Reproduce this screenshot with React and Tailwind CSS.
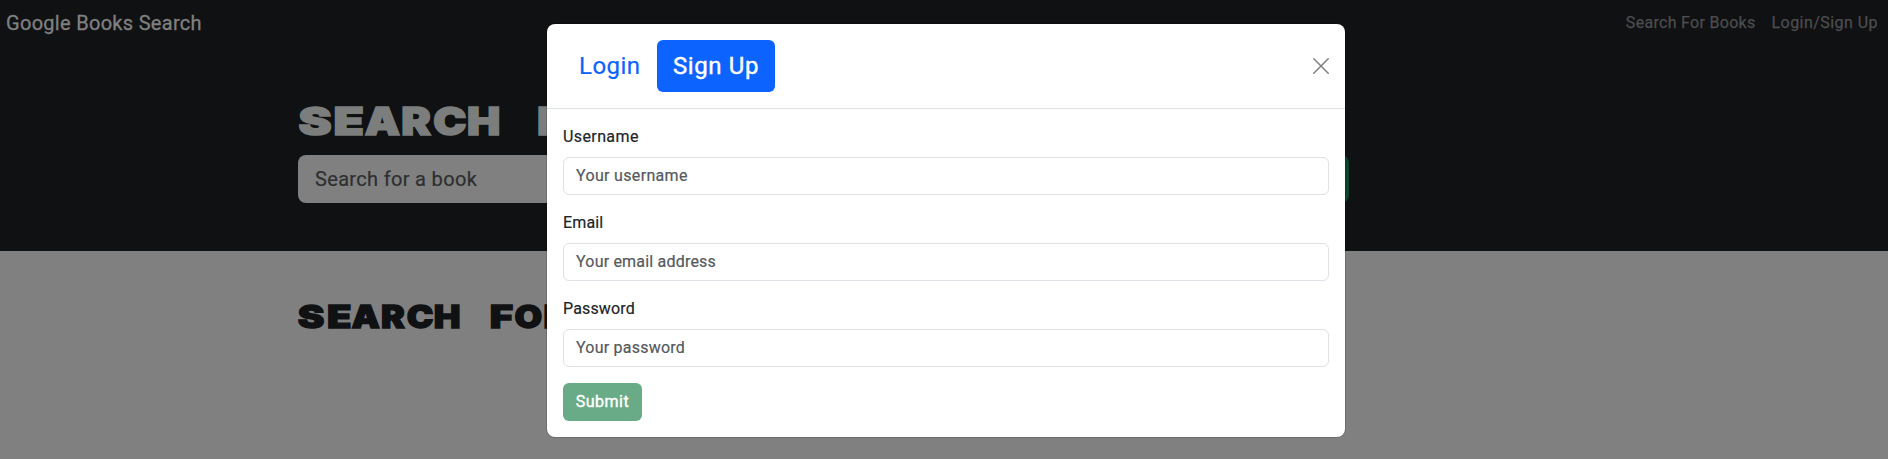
const fields = [
  { label: "Username", placeholder: "Your username", labelSpacing: "tracking-[0.4px]", inputSpacing: "tracking-[0.33px]" },
  { label: "Email", placeholder: "Your email address", labelSpacing: "tracking-[0.15px]", inputSpacing: "tracking-[0.2px]" },
  { label: "Password", placeholder: "Your password", labelSpacing: "tracking-[0.15px]", inputSpacing: "tracking-[0.23px]" },
];

// Sets each character in an equal-width cell, giving a monospaced display face.
// Narrow letters are widened so that they fill their cell.
function MonoText({ text }) {
  return text.split("").map((ch, i) => (
    <span key={i} className="inline-block w-[0.76em] text-center whitespace-pre">
      <span className={`-mx-2 inline-block ${"SEF".includes(ch) ? "scale-x-[1.12]" : ""}`}>{ch}</span>
    </span>
  ));
}

function Page() {
  return (
    <div className="h-[459px] w-full bg-[#808080]">
      <div className="h-[251px] bg-[#101113]">
        <nav className="flex h-[46px] items-center justify-between pr-[10px] pl-[6px]">
          <span className="text-[20px] tracking-[0.3px] text-[#808080] [-webkit-text-stroke:0.3px_#808080]">Google Books Search</span>
          <div className="flex gap-4 pb-px text-[16px] text-[#4c4d4e] [-webkit-text-stroke:0.25px_#4c4d4e]">
            <span className="tracking-[0.3px]">Search For Books</span>
            <span className="tracking-[0.45px]">Login/Sign Up</span>
          </div>
        </nav>
        <div className="ml-[298px] w-[1051px] pt-[51px]">
          <h1 className="h-[58px] origin-left scale-x-[1.162] font-[Inter] text-[38.2px] leading-[48px] font-black whitespace-nowrap text-[#7c7d7d] [-webkit-text-stroke:1.6px_#7c7d7d]"><MonoText text="SEARCH FOR" /></h1>
          <div className="flex justify-between">
            <div className="flex h-12 w-[860px] items-center rounded-lg bg-[#808080] px-[17px] text-[20px] tracking-[0.33px] text-[#2d2f30] [-webkit-text-stroke:0.2px_#2d2f30]">Search for a book</div>
            <div className="h-12 w-[170px] rounded-lg bg-[#0c442a]" />
          </div>
        </div>
      </div>
      <h2 className="ml-[298px] w-[300px] origin-left scale-x-[1.162] pt-[47px] font-[Inter] text-[30.7px] leading-[38px] font-black whitespace-nowrap text-[#101113] [-webkit-text-stroke:1.3px_#101113]"><MonoText text="SEARCH FOR" /></h2>
    </div>
  );
}

function SignUpModal() {
  return (
    <div className="absolute top-[24px] left-[547px] flex h-[413px] w-[798px] flex-col rounded-lg bg-white text-[16px] text-[#212529] shadow-[0_0_0_1px_rgba(0,0,0,0.15)] [-webkit-text-stroke:0.2px_currentColor]">
      <div className="flex h-[85px] shrink-0 items-center justify-between border-b border-[#dee2e6] px-4">
        <div className="flex h-[52px] text-[24px] text-[#0d63fd]">
          <button className="w-[94px] pl-[16px] text-left tracking-[0.45px]">Login</button>
          <button className="w-[118px] rounded-md bg-[#0d63fd] tracking-[0.6px] text-white [-webkit-text-stroke:0.4px_white]">Sign Up</button>
        </div>
        <svg viewBox="0 0 16 16" className="h-4 w-4" fill="none" stroke="#7f7f7f" strokeWidth="1.5" strokeLinecap="round">
          <path d="M.8.8 15.2 15.2M15.2.8.8 15.2" />
        </svg>
      </div>
      <div className="px-4 pt-4">
        {fields.map((f) => (
          <div key={f.label} className="mb-4">
            <div className={`mb-2 h-6 leading-6 ${f.labelSpacing}`}>{f.label}</div>
            <div className={`flex h-[38px] items-center rounded-md border border-[#dee2e6] px-3 text-[#55595c] ${f.inputSpacing}`}>{f.placeholder}</div>
          </div>
        ))}
        <button className="h-[38px] w-[79px] rounded-md bg-[#69aa87] tracking-[0.5px] text-white [-webkit-text-stroke:0.4px_white]">Submit</button>
      </div>
    </div>
  );
}

export default function App() {
  return (
    <div className="relative h-[459px] overflow-hidden font-[Roboto,sans-serif]">
      <Page />
      <SignUpModal />
    </div>
  );
}
